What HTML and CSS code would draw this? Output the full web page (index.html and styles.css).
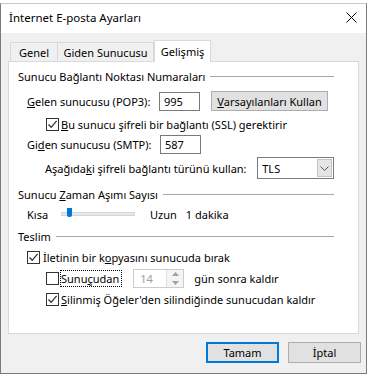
FILE: index.html
```html
<!DOCTYPE html>
<html lang="tr">
<head>
  <meta charset="UTF-8">
  <title>İnternet E-posta Ayarları</title>
  <link rel="stylesheet" href="styles.css">
</head>
<body>
  <div class="window">
    <div class="titlebar">
      <span class="title">İnternet E-posta Ayarları</span>
      <svg class="close" width="11" height="11" viewBox="0 0 11 11"><path d="M0.5 0.5 L10.5 10.5 M10.5 0.5 L0.5 10.5" stroke="#000" stroke-width="1"/></svg>
    </div>

    <div class="tabs">
      <div class="tab tab-genel">Genel</div>
      <div class="tab tab-giden">Giden Sunucusu</div>
      <div class="tab tab-active">Gelişmiş</div>
    </div>

    <div class="panel">
      <div class="legend l1"><span>Sunucu Bağlantı Noktası Numaraları</span><i></i></div>

      <div class="row r-gelen">
        <span class="lbl lbl-gelen"><u>G</u>elen sunucusu (POP3):</span>
        <div class="input in-gelen">995</div>
        <div class="btn btn-def"><u>V</u>arsayılanları Kullan</div>
      </div>

      <div class="row r-ssl sub">
        <span class="cb checked"><svg width="11" height="11" viewBox="0 0 11 11"><path d="M1.5 5.5 L4.2 8.3 L9.6 1.8" fill="none" stroke="#333" stroke-width="1.3"/></svg></span>
        <span><u>B</u>u sunucu şifreli bir bağlantı (SSL) gerektirir</span>
      </div>

      <div class="row r-smtp">
        <span class="lbl lbl-smtp">Gi<u>d</u>en sunucusu (SMTP):</span>
        <div class="input in-smtp">587</div>
      </div>

      <div class="row r-tls">
        <span class="lbl lbl-tls">Aşağıda<u>k</u>i şifreli bağlantı türünü kullan:</span>
        <div class="select">
          <span class="sel-val">TLS</span>
          <span class="sel-arrow"><svg width="9" height="5" viewBox="0 0 9 5"><path d="M0.5 0.5 L4.5 4.5 L8.5 0.5" fill="none" stroke="#555" stroke-width="1"/></svg></span>
        </div>
      </div>

      <div class="legend l2"><span>Sunucu <u>Z</u>aman Aşımı Sayısı</span><i></i></div>

      <div class="row r-slider">
        <span class="lbl lbl-kisa">Kısa</span>
        <div class="slider">
          <div class="track"></div>
          <div class="thumb"></div>
        </div>
        <span class="uzun">Uzun</span>
        <span class="dakika">1 dakika</span>
      </div>

      <div class="legend l3"><span>Teslim</span><i></i></div>

      <div class="row r-kopya">
        <span class="cb checked"><svg width="11" height="11" viewBox="0 0 11 11"><path d="M1.5 5.5 L4.2 8.3 L9.6 1.8" fill="none" stroke="#333" stroke-width="1.3"/></svg></span>
        <span>İletinin bir k<u>o</u>pyasını sunucuda bırak</span>
      </div>

      <div class="row r-gun sub">
        <span class="cb"></span>
        <span class="focus">Sunu<u>ç</u>udan</span>
        <div class="spin">
          <span class="spin-val">14</span>
          <span class="spin-btns">
            <svg width="7" height="4" viewBox="0 0 7 4"><path d="M0 4 L3.5 0 L7 4 Z" fill="#a0a0a0"/></svg>
            <svg width="7" height="4" viewBox="0 0 7 4"><path d="M0 0 L3.5 4 L7 0 Z" fill="#a0a0a0"/></svg>
          </span>
        </div>
        <span class="gun">gün sonra kaldır</span>
      </div>

      <div class="row r-silinmis sub">
        <span class="cb checked"><svg width="11" height="11" viewBox="0 0 11 11"><path d="M1.5 5.5 L4.2 8.3 L9.6 1.8" fill="none" stroke="#333" stroke-width="1.3"/></svg></span>
        <span><u>S</u>ilinmiş Öğeler'den silindiğinde sunucudan kaldır</span>
      </div>
    </div>

    <div class="buttons">
      <div class="btn btn-ok">Tamam</div>
      <div class="btn btn-cancel">İptal</div>
    </div>
  </div>
</body>
</html>
```

FILE: styles.css
```css
body {
  margin: 0;
  background: #ffffff;
  font-family: "Noto Sans", sans-serif;
  font-size: 11px;
  color: #000;
}

.window {
  margin-top: 3px;
  width: 367px;
  height: 371px;
  box-sizing: border-box;
  border: 1px solid #7a7a7a;
  border-top-color: #c8c8c8;
  background: #f0f0f0;
}

.titlebar {
  height: 29px;
  background: #fff;
  display: flex;
  align-items: center;
  justify-content: space-between;
  padding: 0 9px 0 8px;
}
.title { font-size: 11.5px; margin-top: -2px; }
.close { margin-top: -3px; }

.tabs {
  display: flex;
  align-items: flex-end;
  height: 28px;
  margin-left: 9px;
}
.tab {
  height: 19px;
  line-height: 19px;
  box-sizing: border-box;
  border: 1px solid #d9d9d9;
  border-bottom: none;
  background: #f0f0f0;
  text-align: center;
}
.tab-genel { width: 48px; }
.tab-giden { width: 96px; border-left: none; }
.tab-active {
  width: 57px;
  height: 22px;
  line-height: 21px;
  background: #fff;
  margin-bottom: -1px;
  position: relative;
  z-index: 1;
}

.panel {
  margin-left: 7px;
  width: 351px;
  height: 273px;
  box-sizing: border-box;
  border: 1px solid #d9d9d9;
  background: #fff;
  padding: 7px 24px 0 9px;
}

.row {
  display: flex;
  align-items: center;
  padding-left: 9px;
  white-space: nowrap;
}
.row.sub { padding-left: 28px; }

.legend {
  display: flex;
  align-items: center;
  height: 14px;
  white-space: nowrap;
}
.legend i {
  flex: 1;
  height: 1px;
  background: #a8a8a8;
  margin-left: 5px;
}
.l2 { margin-top: 8px; }
.l3 { margin-top: 8px; }

.r-gelen { height: 20px; margin-top: 8px; }
.lbl-gelen { width: 132px; }
.input {
  box-sizing: border-box;
  height: 19px;
  border: 1px solid #7a7a7a;
  padding-left: 4px;
  line-height: 17px;
}
.in-gelen { width: 41px; }
.btn-def {
  margin-left: 11px;
  width: 117px;
  height: 20px;
}

.btn {
  box-sizing: border-box;
  border: 1px solid #adadad;
  background: #e1e1e1;
  display: flex;
  align-items: center;
  justify-content: center;
}

.r-ssl { height: 14px; margin-top: 6px; }
.cb {
  width: 13px;
  height: 13px;
  box-sizing: border-box;
  border: 1px solid #333;
  background: #fff;
  display: inline-flex;
  align-items: center;
  justify-content: center;
  margin-right: 2px;
  flex: none;
}

.r-smtp { height: 19px; margin-top: 4px; }
.lbl-smtp { width: 133px; }
.in-smtp { width: 41px; }

.r-tls { height: 22px; margin-top: 3px; padding-left: 27px; }
.lbl-tls { width: 213px; }
.select {
  width: 77px;
  height: 22px;
  box-sizing: border-box;
  border: 1px solid #7a7a7a;
  display: flex;
  align-items: center;
  justify-content: space-between;
  padding: 0 1px 0 4px;
}
.sel-arrow {
  width: 15px;
  height: 18px;
  background: #e5e5e5;
  border: 1px solid #c4c4c4;
  box-sizing: border-box;
  display: flex;
  align-items: center;
  justify-content: center;
}

.r-slider { height: 14px; margin-top: 6px; }
.lbl-kisa { width: 34px; }
.slider {
  position: relative;
  width: 74px;
  height: 14px;
}
.track {
  margin-top: 5px;
  height: 4px;
  background: #e7e7e7;
  border: 1px solid #d6d6d6;
  box-sizing: border-box;
}
.thumb {
  position: absolute;
  left: 6px;
  top: 1px;
  width: 5px;
  height: 9px;
  background: #0078d7;
  border-radius: 0 0 2px 2px;
}
.uzun { margin-left: 15px; }
.dakika { margin-left: 9px; }

.r-kopya { height: 14px; margin-top: 7px; }
.r-kopya .cb { margin-right: 3px; }

.r-gun { height: 19px; margin-top: 5px; }
.focus {
  outline: 1px dotted #000;
  outline-offset: 0;
  padding: 0 2px 0 0;
  margin-left: 0;
}
.spin {
  margin-left: 12px;
  width: 51px;
  height: 19px;
  box-sizing: border-box;
  border: 1px solid #cccccc;
  display: flex;
  justify-content: space-between;
  align-items: center;
  padding-left: 6px;
  color: #a0a0a0;
}
.spin-btns {
  width: 16px;
  height: 17px;
  border-left: 1px solid #e0e0e0;
  background: #f4f4f4;
  display: flex;
  flex-direction: column;
  justify-content: space-around;
  align-items: center;
}
.gun { margin-left: 10px; }

.r-silinmis { height: 14px; margin-top: 4px; }

.buttons {
  display: flex;
  justify-content: flex-end;
  gap: 9px;
  padding-right: 5px;
  margin-top: 8px;
}
.btn-ok, .btn-cancel {
  width: 73px;
  height: 21px;
}
.btn-ok {
  border: 2px solid #0078d7;
}
```
